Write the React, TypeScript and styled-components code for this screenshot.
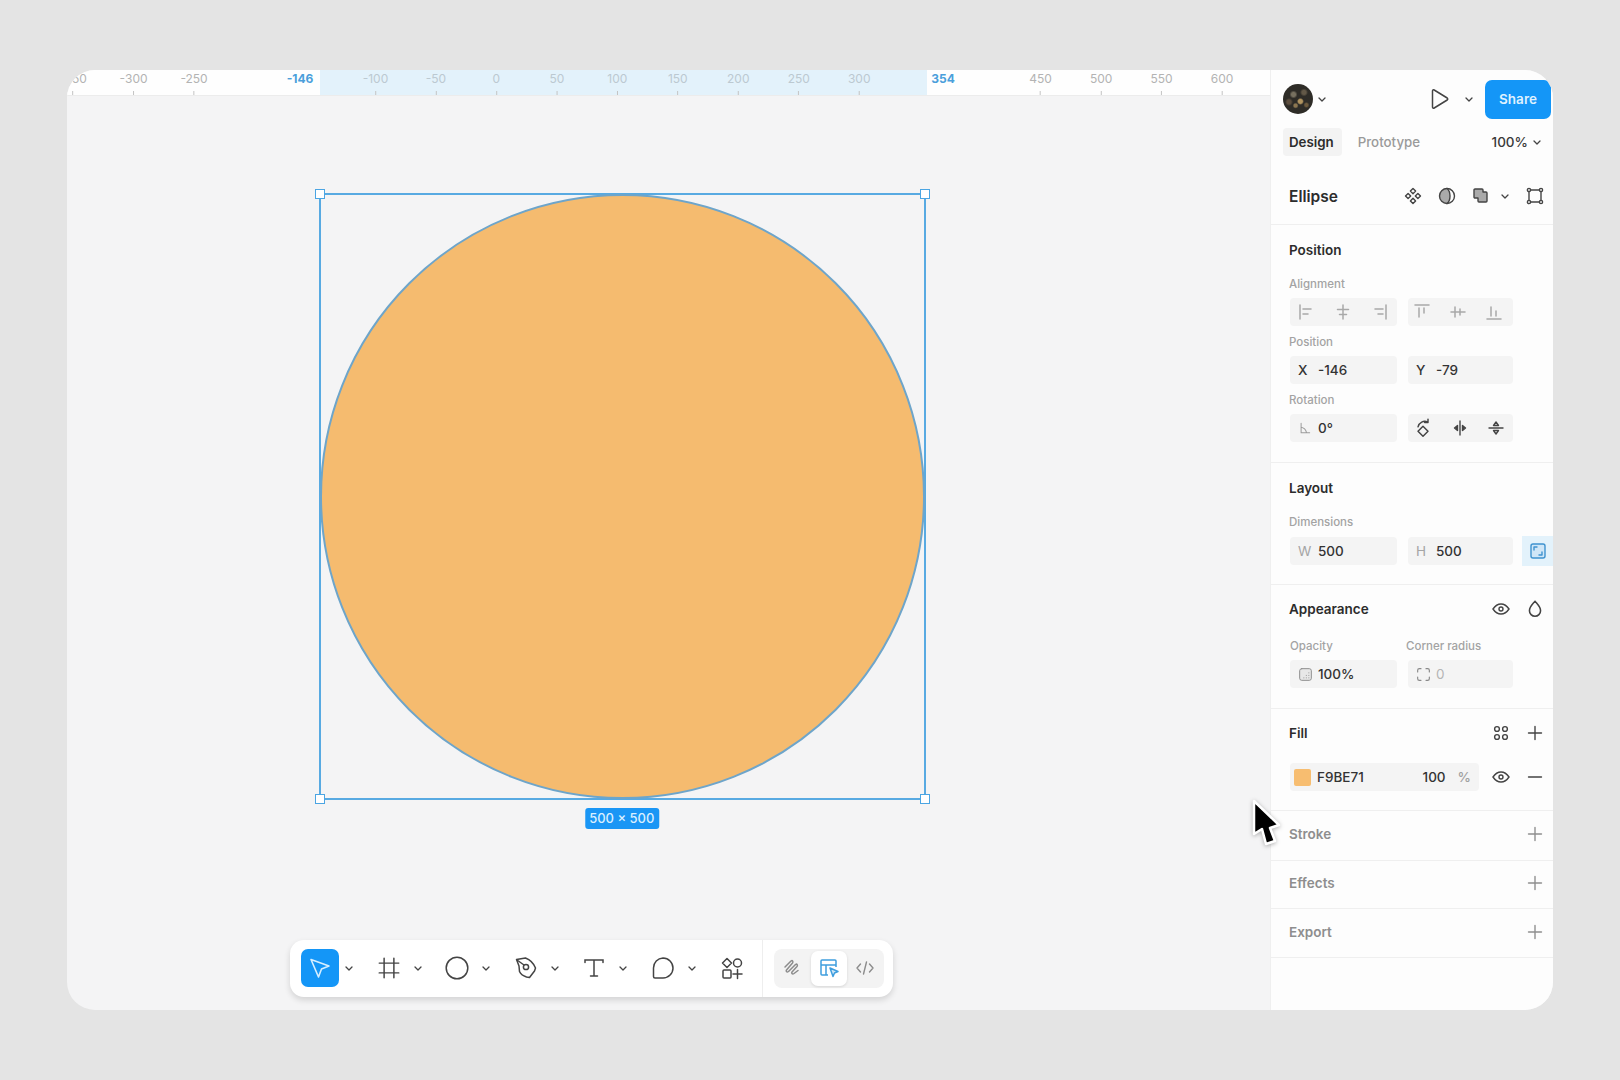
import React from "react";
import { createGlobalStyle, styled } from "styled-components";

const GlobalStyle = createGlobalStyle`
    html, body {
        margin: 0;
        background: #e4e4e4;
        font-family: "Inter", "Liberation Sans", sans-serif;
    }
    * { box-sizing: border-box; }
`;

const Page = styled.div`
    width: 1620px;
    height: 1080px;
    padding: 70px 67px;
    overflow: hidden;
`;

const Window = styled.div`
    position: relative;
    display: flex;
    width: 1486px;
    height: 940px;
    border-radius: 28px;
    overflow: hidden;
    background: #f4f4f5;
`;

const CanvasColumn = styled.div`
    flex: 1;
    display: flex;
    flex-direction: column;
    min-width: 0;
`;

/* ruler */
const Ruler = styled.div`
    position: relative;
    height: 26px;
    flex: none;
    background: #fefefe;
    border-bottom: 1px solid #ececec;
    overflow: hidden;
`;

const RulerRange = styled.div`
    position: absolute;
    left: 253px;
    top: 0;
    bottom: 0;
    width: 607px;
    background: #e3f2fb;
`;

const RulerMark = styled.div<{ $active?: boolean; $inside?: boolean }>`
    position: absolute;
    top: 2px;
    transform: translateX(-50%);
    display: flex;
    flex-direction: column;
    align-items: center;
    gap: 5px;
    font-size: 12px;
    line-height: 14px;
    white-space: nowrap;
    font-weight: ${p => (p.$active ? 700 : 400)};
    color: ${p => (p.$active ? "#4a9fdb" : p.$inside ? "#bcc9d1" : "#b3b3b3")};
`;

const RulerTick = styled.span`
    width: 1px;
    height: 4px;
    background: #c4c4c4;
`;

/* canvas */
const Canvas = styled.div`
    position: relative;
    flex: 1;
`;

const Selection = styled.div`
    position: absolute;
    left: 252px;
    top: 97px;
    width: 607px;
    height: 607px;
    border: 2px solid #58aae2;
`;

const Circle = styled.div`
    width: calc(100% + 2px);
    height: calc(100% + 2px);
    margin: -1px;
    border-radius: 50%;
    background: #f5bb6f;
    border: 2px solid #6ea5ca;
`;

const Handle = styled.span<{ $x: "left" | "right"; $y: "top" | "bottom" }>`
    position: absolute;
    ${p => p.$x}: -6px;
    ${p => p.$y}: -6px;
    width: 10px;
    height: 10px;
    background: #fff;
    border: 1.5px solid #4ba5e3;
`;

const SizeBadge = styled.div`
    position: absolute;
    left: 50%;
    bottom: -31px;
    transform: translateX(-51%);
    width: 74px;
    height: 21px;
    border-radius: 3px;
    background: #1a96f5;
    color: #d9efff;
    font-size: 13px;
    font-weight: 500;
    line-height: 21px;
    text-align: center;
    white-space: nowrap;
`;

/* bottom toolbar */
const Toolbar = styled.div`
    position: absolute;
    left: 223px;
    top: 844px;
    display: flex;
    align-items: center;
    width: 603px;
    height: 57px;
    padding: 0 0 1px 11px;
    background: #fff;
    border-radius: 14px;
    box-shadow: 0 3px 6px rgba(0, 0, 0, 0.14);
`;

const ToolSlot = styled.div`
    display: flex;
    align-items: center;
    width: 68.6px;
    height: 100%;
`;

const ToolButton = styled.div<{ $active?: boolean }>`
    display: flex;
    align-items: center;
    justify-content: center;
    width: 38px;
    height: 38px;
    flex: none;
    border-radius: 7px;
    background: ${p => (p.$active ? "#1496f7" : "transparent")};
`;

const ToolChevron = styled.div`
    display: flex;
    justify-content: center;
    width: 20px;
`;

const ToolDivider = styled.div`
    width: 1px;
    height: 57px;
    margin-left: 11px;
    background: #eeeeee;
`;

const ModeGroup = styled.div`
    display: flex;
    align-items: center;
    width: 110px;
    height: 39px;
    margin-left: 11px;
    padding: 0 0 0 1px;
    border-radius: 8px;
    background: #f3f3f3;
`;

const ModeButton = styled.div<{ $active?: boolean }>`
    display: flex;
    align-items: center;
    justify-content: center;
    width: 36px;
    height: 35px;
    flex: none;
    border-radius: 7px;
    background: ${p => (p.$active ? "#fff" : "transparent")};
    box-shadow: ${p => (p.$active ? "0 1px 3px rgba(0,0,0,.12)" : "none")};
`;

const Cursor = styled.svg`
    position: absolute;
    left: 1184px;
    top: 728px;
    filter: drop-shadow(0 1px 2px rgba(0, 0, 0, 0.3));
`;

/* right panel */
const Panel = styled.aside`
    width: 283px;
    flex: none;
    display: flex;
    flex-direction: column;
    background: #fdfdfd;
    border-left: 1px solid #efefef;
    color: #2c2c2c;
`;

const PanelHead = styled.div`
    height: 155px;
    flex: none;
    padding-top: 10px;
    border-bottom: 1px solid #efefef;
`;

const TopRow = styled.div`
    display: flex;
    align-items: center;
    height: 38px;
    padding-left: 12px;
`;

const Avatar = styled.div`
    width: 30px;
    height: 30px;
    border-radius: 50%;
    margin-right: 5px;
    background:
        radial-gradient(circle at 58% 58%, #b0935f 0 2px, transparent 3.5px),
        radial-gradient(circle at 42% 72%, #8c7650 0 1.5px, transparent 3px),
        radial-gradient(circle at 35% 35%, #77705f 0 2px, transparent 4px),
        radial-gradient(circle at 70% 28%, #625847 0 2px, transparent 4px),
        radial-gradient(circle at 20% 60%, #5d4e3e 0 2px, transparent 4px),
        radial-gradient(circle at 78% 70%, #6d5a3d 0 1.5px, transparent 3px),
        #2e2c27;
`;

const PlayGroup = styled.div`
    display: flex;
    align-items: center;
    margin-left: auto;
    gap: 16px;
    margin-right: 12px;
`;

const ShareButton = styled.div`
    width: 66px;
    height: 39px;
    margin-right: 2px;
    border-radius: 7px;
    background: #1496f7;
    color: #dff1ff;
    font-size: 13.5px;
    font-weight: 600;
    line-height: 39px;
    text-align: center;
`;

const TabRow = styled.div`
    display: flex;
    align-items: center;
    height: 28px;
    margin-top: 10px;
    padding-left: 12px;
`;

const Tab = styled.div<{ $active?: boolean }>`
    height: 28px;
    padding: 0 8px 0 6px;
    margin-right: 10px;
    border-radius: 4px;
    background: ${p => (p.$active ? "#f3f3f3" : "transparent")};
    color: ${p => (p.$active ? "#2c2c2c" : "#9a9a9a")};
    font-size: 13.3px;
    font-weight: ${p => (p.$active ? 600 : 500)};
    line-height: 28px;
`;

const Zoom = styled.div`
    display: flex;
    align-items: center;
    gap: 5px;
    margin-left: auto;
    margin-right: 12px;
    font-size: 13.5px;
    font-weight: 500;
    color: #3a3a3a;
`;

const NameRow = styled.div`
    display: flex;
    align-items: center;
    height: 24px;
    margin-top: 28px;
    padding: 0 9px 0 18px;
`;

const NodeName = styled.div`
    font-size: 15.5px;
    font-weight: 600;
    margin-right: auto;
`;

const IconTray = styled.div`
    display: flex;
    align-items: center;
    gap: 16px;
`;

const TrayChevron = styled.div`
    display: flex;
    margin: 0 1px 0 -5px;
`;

const Section = styled.section<{ $height: number; $top?: number }>`
    height: ${p => p.$height}px;
    flex: none;
    padding: ${p => p.$top ?? 14}px 6px 0 18px;
    border-bottom: 1px solid #efefef;
`;

const CollapsedSection = styled.section<{ $height: number }>`
    display: flex;
    align-items: center;
    justify-content: space-between;
    height: ${p => p.$height}px;
    flex: none;
    padding: 0 6px 3px 18px;
    border-bottom: 1px solid #efefef;
`;

const SectionHead = styled.div`
    display: flex;
    align-items: center;
    justify-content: space-between;
    height: 20px;
`;

const Title = styled.div<{ $muted?: boolean }>`
    font-size: 13.5px;
    line-height: 20px;
    font-weight: 600;
    color: ${p => (p.$muted ? "#8e8e8e" : "#2c2c2c")};
`;

const HeadIcons = styled.div`
    display: flex;
    align-items: center;
    gap: 10px;
`;

const IconSlot = styled.div`
    display: flex;
    align-items: center;
    justify-content: center;
    width: 24px;
    height: 24px;
`;

const Blocks = styled.div<{ $top: number }>`
    display: flex;
    flex-direction: column;
    gap: 9px;
    margin-top: ${p => p.$top}px;
`;

const Label = styled.div`
    height: 14px;
    margin-bottom: 7px;
    font-size: 11.5px;
    font-weight: 500;
    line-height: 14px;
    color: #a3a3a3;
`;

const TwoLabels = styled.div`
    display: grid;
    grid-template-columns: 107px 105px;
    column-gap: 9px;
    padding-left: 1px;
`;

const FieldRow = styled.div`
    display: flex;
    align-items: center;
    gap: 11px;
    padding-left: 1px;
`;

const Field = styled.div<{ $wide?: boolean }>`
    display: flex;
    align-items: center;
    flex: none;
    width: ${p => (p.$wide ? "107px" : "105px")};
    height: 28px;
    padding-left: 8px;
    border-radius: 4px;
    background: #f4f4f4;
    font-size: 13.5px;
    font-weight: 500;
    color: #333;
`;

const FieldKey = styled.span<{ $faint?: boolean }>`
    width: 20px;
    flex: none;
    display: flex;
    color: ${p => (p.$faint ? "#a5a5a5" : "#333")};
    font-weight: ${p => (p.$faint ? 400 : 500)};
`;

const FaintValue = styled.span`
    color: #b5b5b5;
    font-weight: 400;
`;

const IconField = styled.div<{ $wide?: boolean }>`
    display: flex;
    align-items: center;
    flex: none;
    gap: 18px;
    width: ${p => (p.$wide ? "107px" : "105px")};
    height: 28px;
    padding-left: ${p => (p.$wide ? "8px" : "5px")};
    border-radius: 4px;
    background: #f4f4f4;
`;

const RatioToggle = styled.div`
    display: flex;
    align-items: center;
    justify-content: center;
    flex: none;
    width: 31px;
    height: 30px;
    margin-left: -2px;
    background: #e3f2fb;
`;

const FillRow = styled.div`
    display: flex;
    align-items: center;
    margin-top: 20px;
    padding-left: 1px;
`;

const FillField = styled.div`
    display: flex;
    align-items: center;
    width: 189px;
    height: 28px;
    margin-right: 10px;
    padding: 0 8px 0 4px;
    border-radius: 4px;
    background: #f4f4f4;
    font-size: 13.5px;
    font-weight: 500;
    color: #333;
`;

const Swatch = styled.span`
    width: 17px;
    height: 17px;
    margin-right: 6px;
    border-radius: 2px;
    background: #f7bd70;
`;

const FillPercent = styled.span`
    margin-left: auto;
    margin-right: 12px;
`;

const PercentSign = styled.span`
    color: #a0a0a0;
`;

/* icons, all stroke drawings from the reference */
const Chevron = ({ color = "#444" }: { color?: string }) => (
    <svg width="8" height="5" viewBox="0 0 8 5" fill="none">
        <path d="M1 1l3 3 3-3" stroke={color} strokeWidth="1.3" strokeLinecap="round" strokeLinejoin="round" />
    </svg>
);

const Ico = ({ size = 18, children, stroke = "#444", sw = 1.4 }: { size?: number; children: React.ReactNode; stroke?: string; sw?: number }) => (
    <svg width={size} height={size} viewBox="0 0 18 18" fill="none" stroke={stroke} strokeWidth={sw} strokeLinecap="round" strokeLinejoin="round">
        {children}
    </svg>
);

const Play = () => (
    <svg width="18" height="22" viewBox="0 0 18 22" fill="none">
        <path d="M1.5 3v16c0 1 .9 1.5 1.7 1l13-8c.7-.5.7-1.5 0-2l-13-8c-.8-.5-1.7 0-1.7 1z" stroke="#444" strokeWidth="1.5" />
    </svg>
);

const ComponentIcon = () => (
    <Ico>
        <path d="M9 1.500l2.600 2.600L9 6.700 6.400 4.100zM4.100 6.400L6.700 9l-2.600 2.600L1.500 9zM13.900 6.400L16.500 9l-2.600 2.600L11.300 9zM9 11.300l2.600 2.600L9 16.500l-2.600-2.600z" />
    </Ico>
);

const MaskIcon = () => (
    <Ico>
        <path d="M9 1.500a7.500 7.500 0 0 0 0 15c2-1.500 3-4.500 3-7.500s-1-6-3-7.500z" fill="#aaa" stroke="none" />
        <circle cx="9" cy="9" r="7.500" />
        <path d="M9 1.500c2 1.500 3 4.500 3 7.500s-1 6-3 7.500" />
    </Ico>
);

const BooleanIcon = () => (
    <Ico>
        <path d="M3 2h7a1 1 0 0 1 1 1v2h3a1 1 0 0 1 1 1v8a1 1 0 0 1-1 1H7a1 1 0 0 1-1-1v-3H3a1 1 0 0 1-1-1V3a1 1 0 0 1 1-1z" fill="#aaa" />
    </Ico>
);

const OutlineIcon = () => (
    <Ico>
        <path d="M4.500 3h9M4.500 15h9M3 4.500v9M15 4.500v9" />
        <circle cx="3" cy="3" r="1.600" />
        <circle cx="15" cy="3" r="1.600" />
        <circle cx="3" cy="15" r="1.600" />
        <circle cx="15" cy="15" r="1.600" />
    </Ico>
);

const AlignIcons = [
    <path key="l" d="M2 2v14M5 6h8M5 11h5" />,
    <path key="c" d="M9 2v14M3.500 6.500h11M5.500 11.500h7" />,
    <path key="r" d="M16 2v14M5 6h8M8 11h5" />,
    <path key="t" d="M2 2h14M6 5v9M11 5v5" />,
    <path key="m" d="M2 9h14M6 4v10M11 6v6" />,
    <path key="b" d="M2 16h14M6 4v9M11 8v5" />,
];

const Eye = ({ stroke = "#444" }: { stroke?: string }) => (
    <svg width="18" height="12" viewBox="0 0 18 12" fill="none" stroke={stroke} strokeWidth="1.4">
        <path d="M1 6c2-3 4.800-5 8-5s6 2 8 5c-2 3-4.800 5-8 5S3 9 1 6z" />
        <circle cx="9" cy="6" r="2" />
    </svg>
);

const Drop = () => (
    <Ico size={20}>
        <path d="M9 2c2.500 3 5 5.200 5 8.500a5 5 0 0 1-10 0C4 7.200 6.500 5 9 2z" />
    </Ico>
);

const Styles = () => (
    <Ico>
        <circle cx="5" cy="5" r="2.400" />
        <circle cx="13" cy="5" r="2.400" />
        <circle cx="5" cy="13" r="2.400" />
        <circle cx="13" cy="13" r="2.400" />
    </Ico>
);

const Plus = ({ muted }: { muted?: boolean }) => (
    <Ico stroke={muted ? "#8f8f8f" : "#444"}>
        <path d="M9 2.500v13M2.500 9h13" />
    </Ico>
);

const Minus = () => (
    <Ico>
        <path d="M2.500 9h13" />
    </Ico>
);

const App: React.FC = () => {
    const hiddenMarks = [-200, -150, 350, 400];
    const marks: number[] = [];
    for (let v = -350; v <= 600; v += 50) {
        if (!hiddenMarks.includes(v)) marks.push(v);
    }

    return (
        <Page>
            <GlobalStyle />
            <Window>
                <CanvasColumn>
                    <Ruler>
                        <RulerRange />
                        {marks.map(v => (
                            <RulerMark key={v} $inside={v >= -100 && v <= 300} style={{ left: 429.4 + v * 1.2094 }}>
                                {v}
                                <RulerTick />
                            </RulerMark>
                        ))}
                        <RulerMark $active style={{ left: 233 }}>-146</RulerMark>
                        <RulerMark $active style={{ left: 876 }}>354</RulerMark>
                    </Ruler>
                    <Canvas>
                        <Selection>
                            <Circle />
                            <Handle $x="left" $y="top" />
                            <Handle $x="right" $y="top" />
                            <Handle $x="left" $y="bottom" />
                            <Handle $x="right" $y="bottom" />
                            <SizeBadge>500 × 500</SizeBadge>
                        </Selection>

                        <Toolbar>
                            <ToolSlot>
                                <ToolButton $active>
                                    <svg width="24" height="24" viewBox="0 0 24 24" fill="none">
                                        <path d="M3 3.500l18 6.500-7.500 3-3 8z" stroke="#d6eeff" strokeWidth="1.600" strokeLinejoin="round" />
                                    </svg>
                                </ToolButton>
                                <ToolChevron><Chevron /></ToolChevron>
                            </ToolSlot>
                            <ToolSlot>
                                <ToolButton>
                                    <Ico size={22} sw={1.200}>
                                        <path d="M5 1v16M13 1v16M1 5h16M1 13h16" />
                                    </Ico>
                                </ToolButton>
                                <ToolChevron><Chevron /></ToolChevron>
                            </ToolSlot>
                            <ToolSlot>
                                <ToolButton>
                                    <svg width="24" height="24" viewBox="0 0 24 24" fill="none">
                                        <circle cx="12" cy="12" r="10.800" stroke="#444" strokeWidth="1.500" />
                                    </svg>
                                </ToolButton>
                                <ToolChevron><Chevron /></ToolChevron>
                            </ToolSlot>
                            <ToolSlot>
                                <ToolButton>
                                    <svg width="24" height="24" viewBox="0 0 24 24" fill="none" stroke="#444" strokeWidth="1.500" strokeLinejoin="round">
                                        <path d="M2.500 3.500l9-1.500c4 1.500 8 5 10 10l-1 3-5 6.500-3-.5c-3-1-6-3-7-5.500L5 10z" />
                                        <circle cx="12" cy="11" r="2.600" />
                                        <path d="M3 4l7 5" />
                                    </svg>
                                </ToolButton>
                                <ToolChevron><Chevron /></ToolChevron>
                            </ToolSlot>
                            <ToolSlot>
                                <ToolButton>
                                    <svg width="22" height="22" viewBox="0 0 22 22" fill="none" stroke="#444" strokeWidth="1.500" strokeLinecap="round">
                                        <path d="M2 5.500V3h18v2.500M11 3v16M7.500 19h7" />
                                    </svg>
                                </ToolButton>
                                <ToolChevron><Chevron /></ToolChevron>
                            </ToolSlot>
                            <ToolSlot>
                                <ToolButton>
                                    <svg width="24" height="24" viewBox="0 0 24 24" fill="none">
                                        <path d="M12 2a10 10 0 0 1 0 20H4a1.500 1.500 0 0 1-1.500-1.500V12A10 10 0 0 1 12 2z" stroke="#444" strokeWidth="1.500" />
                                    </svg>
                                </ToolButton>
                                <ToolChevron><Chevron /></ToolChevron>
                            </ToolSlot>
                            <ToolButton>
                                <svg width="24" height="24" viewBox="0 0 24 24" fill="none" stroke="#444" strokeWidth="1.500" strokeLinecap="round" strokeLinejoin="round">
                                    <path d="M7 2.500l4.500 4.500L7 11.500 2.500 7z" />
                                    <circle cx="17.500" cy="7" r="4" />
                                    <rect x="3" y="14" width="8" height="8" rx="1" />
                                    <path d="M17.500 13.500v9M13 18h9" />
                                </svg>
                            </ToolButton>
                            <ToolDivider />
                            <ModeGroup>
                                <ModeButton>
                                    <svg width="20" height="20" viewBox="0 0 20 20" fill="none" stroke="#8c8c8c" strokeWidth="1.500" strokeLinecap="round" strokeLinejoin="round">
                                        <path d="M2 9l6-6c1.500-1 2.500.500 1.500 2L3.500 12c-1 1.500.500 2.500 2 1.500l7-7c1.500-1 2.500.500 1.500 2l-5 5.500c-1 1.500.500 2.500 2 1.500l4-3" />
                                    </svg>
                                </ModeButton>
                                <ModeButton $active>
                                    <svg width="20" height="20" viewBox="0 0 20 20" fill="none" stroke="#3f9ede" strokeWidth="1.500" strokeLinejoin="round">
                                        <path d="M9 17H3a1 1 0 0 1-1-1V3a1 1 0 0 1 1-1h13a1 1 0 0 1 1 1v6M2 7h15M7 7v10" />
                                        <path d="M11 10l8 3.500-3.500 1.500-1.500 3.500z" fill="#cfe6f7" />
                                    </svg>
                                </ModeButton>
                                <ModeButton>
                                    <svg width="20" height="18" viewBox="0 0 20 18" fill="none" stroke="#8c8c8c" strokeWidth="1.400" strokeLinecap="round" strokeLinejoin="round">
                                        <path d="M5.500 5L2 9l3.500 4M14.500 5L18 9l-3.500 4M11.500 3l-3 12" />
                                    </svg>
                                </ModeButton>
                            </ModeGroup>
                        </Toolbar>
                    </Canvas>
                </CanvasColumn>

                <Panel>
                    <PanelHead>
                        <TopRow>
                            <Avatar />
                            <Chevron />
                            <PlayGroup>
                                <Play />
                                <Chevron />
                            </PlayGroup>
                            <ShareButton>Share</ShareButton>
                        </TopRow>
                        <TabRow>
                            <Tab $active>Design</Tab>
                            <Tab>Prototype</Tab>
                            <Zoom>100% <Chevron /></Zoom>
                        </TabRow>
                        <NameRow>
                            <NodeName>Ellipse</NodeName>
                            <IconTray>
                                <ComponentIcon />
                                <MaskIcon />
                                <BooleanIcon />
                                <TrayChevron><Chevron /></TrayChevron>
                                <OutlineIcon />
                            </IconTray>
                        </NameRow>
                    </PanelHead>

                    <Section $height={238} $top={15}>
                        <Title>Position</Title>
                        <Blocks $top={17}>
                            <div>
                                <Label>Alignment</Label>
                                <FieldRow>
                                    <IconField $wide>
                                        {AlignIcons.slice(0, 3).map((icon, i) => <Ico key={i} stroke="#a8a8a8" sw={1.500}>{icon}</Ico>)}
                                    </IconField>
                                    <IconField>
                                        {AlignIcons.slice(3).map((icon, i) => <Ico key={i} stroke="#a8a8a8" sw={1.500}>{icon}</Ico>)}
                                    </IconField>
                                </FieldRow>
                            </div>
                            <div>
                                <Label>Position</Label>
                                <FieldRow>
                                    <Field $wide><FieldKey>X</FieldKey>-146</Field>
                                    <Field><FieldKey>Y</FieldKey>-79</Field>
                                </FieldRow>
                            </div>
                            <div>
                                <Label>Rotation</Label>
                                <FieldRow>
                                    <Field $wide>
                                        <FieldKey $faint>
                                            <Ico size={14} stroke="#9a9a9a" sw={1.300}>
                                                <path d="M4 3v12h11M4 8c3 .5 6 3 7 7" />
                                            </Ico>
                                        </FieldKey>
                                        0°
                                    </Field>
                                    <IconField>
                                        <Ico size={20} sw={1.300}>
                                            <path d="M9 7.500l4.500 4.500L9 16.500 4.500 12z" />
                                            <path d="M4.500 8C5.500 4 9.500 2 13 3.500M13.500 1v3h-3" />
                                        </Ico>
                                        <Ico>
                                            <path d="M9 2v14" />
                                            <path d="M6.500 6.500v5L3.500 9zM11.500 6.500v5l3-2.500z" fill="#444" />
                                        </Ico>
                                        <Ico>
                                            <path d="M2 9h14" />
                                            <path d="M6.500 6.500h5L9 3zM6.500 11.500h5L9 15z" />
                                        </Ico>
                                    </IconField>
                                </FieldRow>
                            </div>
                        </Blocks>
                    </Section>

                    <Section $height={122} $top={15}>
                        <Title>Layout</Title>
                        <Blocks $top={17}>
                            <div>
                                <Label>Dimensions</Label>
                                <FieldRow>
                                    <Field $wide><FieldKey $faint>W</FieldKey>500</Field>
                                    <Field><FieldKey $faint>H</FieldKey>500</Field>
                                    <RatioToggle>
                                        <Ico stroke="#3f93cf">
                                            <rect x="2" y="2" width="14" height="14" rx="2" fill="#cfe6f7" />
                                            <path d="M5 8V5h3M13 10v3h-3" />
                                        </Ico>
                                    </RatioToggle>
                                </FieldRow>
                            </div>
                        </Blocks>
                    </Section>

                    <Section $height={124}>
                        <SectionHead>
                            <Title>Appearance</Title>
                            <HeadIcons>
                                <IconSlot><Eye /></IconSlot>
                                <IconSlot><Drop /></IconSlot>
                            </HeadIcons>
                        </SectionHead>
                        <Blocks $top={20}>
                            <div>
                                <TwoLabels>
                                    <Label>Opacity</Label>
                                    <Label>Corner radius</Label>
                                </TwoLabels>
                                <FieldRow>
                                    <Field $wide>
                                        <FieldKey>
                                            <Ico size={15} stroke="#8f8f8f" sw={1.200}>
                                                <rect x="2" y="2" width="14" height="14" rx="2.500" fill="#e8e8e8" />
                                                <path d="M13 7v.1M13 10v.1M13 13v.1M10 10v.1M10 13v.1M7 13v.1" />
                                            </Ico>
                                        </FieldKey>
                                        100%
                                    </Field>
                                    <Field>
                                        <FieldKey>
                                            <Ico size={15} stroke="#8a8a8a" sw={1.400}>
                                                <path d="M2 6V4a2 2 0 0 1 2-2h2M12 2h2a2 2 0 0 1 2 2v2M16 12v2a2 2 0 0 1-2 2h-2M6 16H4a2 2 0 0 1-2-2v-2" />
                                            </Ico>
                                        </FieldKey>
                                        <FaintValue>0</FaintValue>
                                    </Field>
                                </FieldRow>
                            </div>
                        </Blocks>
                    </Section>

                    <Section $height={102}>
                        <SectionHead>
                            <Title>Fill</Title>
                            <HeadIcons>
                                <IconSlot><Styles /></IconSlot>
                                <IconSlot><Plus /></IconSlot>
                            </HeadIcons>
                        </SectionHead>
                        <FillRow>
                            <FillField>
                                <Swatch />
                                F9BE71
                                <FillPercent>100</FillPercent>
                                <PercentSign>%</PercentSign>
                            </FillField>
                            <HeadIcons>
                                <IconSlot><Eye /></IconSlot>
                                <IconSlot><Minus /></IconSlot>
                            </HeadIcons>
                        </FillRow>
                    </Section>

                    <CollapsedSection $height={50}>
                        <Title $muted>Stroke</Title>
                        <IconSlot><Plus muted /></IconSlot>
                    </CollapsedSection>
                    <CollapsedSection $height={48}>
                        <Title $muted>Effects</Title>
                        <IconSlot><Plus muted /></IconSlot>
                    </CollapsedSection>
                    <CollapsedSection $height={49}>
                        <Title $muted>Export</Title>
                        <IconSlot><Plus muted /></IconSlot>
                    </CollapsedSection>
                </Panel>

                <Cursor width="34" height="52" viewBox="-3 -3 34 52">
                    <path d="M0 0v33l8-5 4 15 9-3-5-13 9-3z" fill="#000" stroke="#fff" strokeWidth="2.500" strokeLinejoin="round" />
                </Cursor>
            </Window>
        </Page>
    );
};

export default App;
